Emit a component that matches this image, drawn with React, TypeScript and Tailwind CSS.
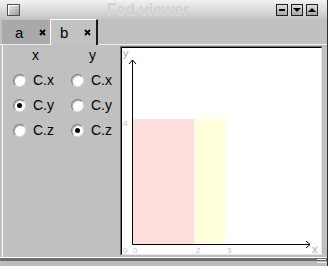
import { Fragment } from "react";

const rows = [
  { label: "C.x", x: false, y: false },
  { label: "C.y", x: true, y: false },
  { label: "C.z", x: false, y: true },
];

function Radio({ checked }: { checked: boolean }) {
  return (
    <span className="flex items-center justify-center w-[13px] h-[13px] rounded-full bg-white border border-t-[#7a7a7a] border-l-[#7a7a7a] border-r-[#d8d8d8] border-b-[#d8d8d8] shadow-[inset_1px_1px_0_#b0b0b0]">
      {checked && <span className="w-[5px] h-[5px] rounded-full bg-black" />}
    </span>
  );
}

function TitleButton({ kind }: { kind: "min" | "down" | "up" }) {
  return (
    <span className="flex items-center justify-center w-[12px] h-[12px] border border-[#202020] bg-gradient-to-b from-[#e0e0e0] to-[#a8a8a8]">
      {kind === "min" && <span className="w-[6px] h-[2px] bg-black" />}
      {kind === "down" && (
        <svg width="8" height="6" viewBox="0 0 8 6">
          <polygon points="0,1 8,1 4,5" fill="#000" />
        </svg>
      )}
      {kind === "up" && (
        <svg width="8" height="6" viewBox="0 0 8 6">
          <polygon points="0,5 8,5 4,1" fill="#000" />
        </svg>
      )}
    </span>
  );
}

function CloseMark() {
  return (
    <svg width="7" height="7" viewBox="0 0 7 7">
      <path d="M1 1 L6 6 M6 1 L1 6" stroke="#000" strokeWidth="1.8" />
    </svg>
  );
}

function Plot() {
  return (
    <svg width="199" height="206" viewBox="0 0 199 206" className="block bg-white">
      <rect x="11" y="71" width="61" height="125" fill="#ffdede" />
      <rect x="72" y="71" width="31" height="125" fill="#ffffdc" />
      <path d="M10.5 12 L10.5 196.5 L188 196.5" stroke="#000" fill="none" />
      <path d="M7 16 L10.5 12 L14 16" stroke="#000" fill="none" />
      <path d="M184 193 L188 196.5 L184 200" stroke="#000" fill="none" />
      <text x="1" y="9" fontSize="11" fill="#a8a8a8" fontFamily="Liberation Sans, sans-serif">y</text>
      <text x="190" y="205" fontSize="11" fill="#b0b0b0" fontFamily="Liberation Sans, sans-serif">x</text>
      <g fontSize="8" fill="#c4c4d0" fontFamily="Liberation Sans, sans-serif">
        <text x="1" y="78">4</text>
        <text x="1" y="205">0</text>
        <text x="11" y="205">0</text>
        <text x="74" y="205">2</text>
        <text x="105" y="205">3</text>
      </g>
    </svg>
  );
}

export default function App() {
  return (
    <div className="w-[328px] h-[266px] flex flex-col bg-[#c0c0c0] border-r border-[#303030] font-['Liberation_Sans',Arial,sans-serif] overflow-hidden">
      {/* title bar */}
      <div className="h-[19px] flex items-center pl-[7px] pr-[9px] bg-gradient-to-b from-[#f2f2f2] to-[#c6c6c6]">
        <span className="w-[13px] h-[12px] border border-[#505050] bg-gradient-to-br from-[#f0f0f0] to-[#9a9a9a] shadow-[inset_1px_1px_0_#ffffff]" />
        <span className="flex-1 text-center text-[16px] font-bold leading-none text-[#d2d2d2] [text-shadow:0_1px_0_#dedede]">
          Fed viewer
        </span>
        <div className="flex gap-[3px]">
          <TitleButton kind="min" />
          <TitleButton kind="down" />
          <TitleButton kind="up" />
        </div>
      </div>

      {/* tabs */}
      <div className="h-[26px] flex items-end pl-[2px] border-b border-[#ececec]">
        <div className="w-[48px] h-[24px] flex items-center bg-[#a9a9a9] pl-[13px] gap-[16px] text-[15px] text-black">
          <span className="leading-none">a</span>
          <CloseMark />
        </div>
        <div className="w-[48px] h-[26px] -mb-px flex items-center bg-[#c2c2c2] border-t border-l border-white border-r-2 border-r-[#1a1a1a] pl-[9px] gap-[16px] text-[15px] text-black">
          <span className="leading-none">b</span>
          <CloseMark />
        </div>
      </div>

      {/* content */}
      <div className="flex-1 flex">
        <div className="w-[120px] pl-[2px]">
          <div className="h-full border-l border-white pt-[2px]">
            <div className="grid grid-cols-[56px_56px] gap-y-[8px] text-[14px] text-black leading-[17px]">
              <span className="pl-[29px]">x</span>
              <span className="pl-[30px]">y</span>
              {rows.map((r) => (
                <Fragment key={r.label}>
                  <div className="flex items-center gap-[7px] pl-[10px]">
                    <Radio checked={r.x} />
                    <span>{r.label}</span>
                  </div>
                  <div className="flex items-center gap-[7px] pl-[12px]">
                    <Radio checked={r.y} />
                    <span>{r.label}</span>
                  </div>
                </Fragment>
              ))}
            </div>
          </div>
        </div>
        <div className="flex-1 pt-[1px] pr-[5px] pb-[2px]">
          <div className="border-t border-l border-[#707070]">
            <div className="border border-t-black border-l-black border-r-[#e4e4e4] border-b-[#e4e4e4]">
              <Plot />
            </div>
          </div>
        </div>
      </div>

      {/* bottom frame */}
      <div className="h-[9px] relative border-t border-white">
        <div className="h-[3px] bg-[#6c6c6c]" />
        <div className="h-[5px] bg-[#bcbcbc]" />
        <svg width="9" height="6" viewBox="0 0 9 6" className="absolute right-[1px] top-0">
          <path d="M0 1.5 H9 M0 4.5 H9" stroke="#f0f0f0" />
        </svg>
      </div>
    </div>
  );
}
